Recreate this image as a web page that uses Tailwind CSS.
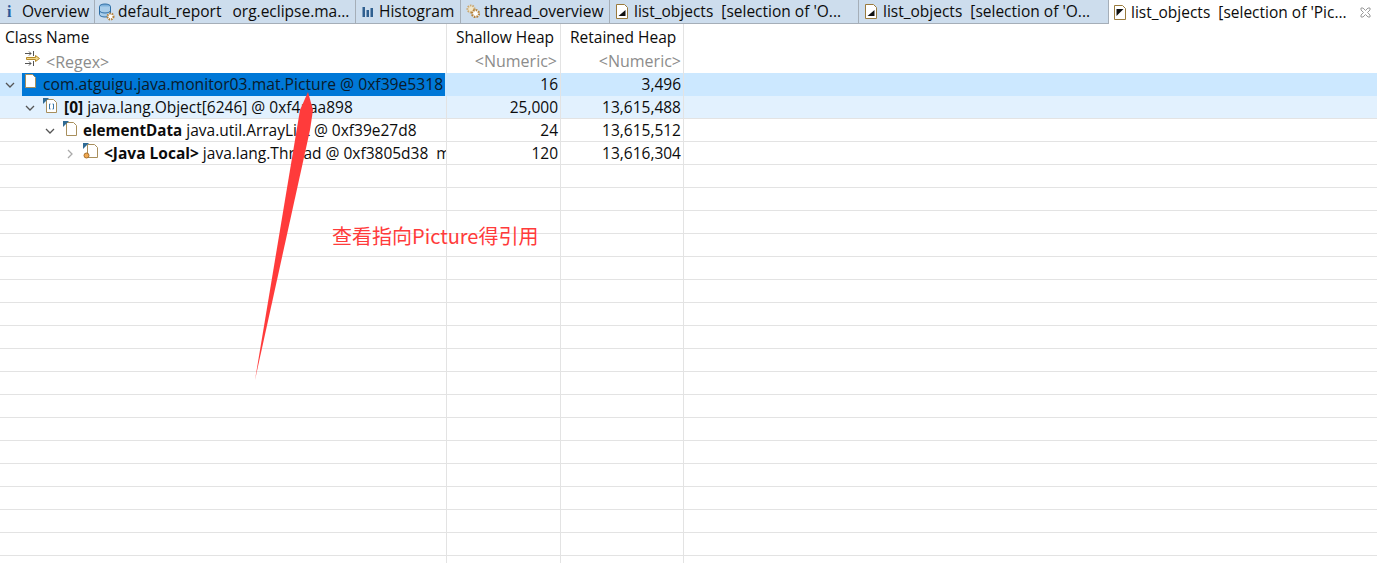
<!DOCTYPE html>
<html lang="en">
  <head>
    <meta charset="UTF-8" />
    <title>list_objects</title>
    <script src="https://cdn.jsdelivr.net/npm/@tailwindcss/browser@4"></script>
  </head>
  <body class="relative h-[563px] w-[1377px] overflow-hidden bg-white font-['Open_Sans','Noto_Sans_CJK_SC',sans-serif] text-[15.5px] text-[#0c0c0c]">
    <!-- tab bar -->
    <div class="flex h-6 border-b border-[#a5aeb8] bg-[#cddded] leading-[25px]">
      <div class="flex w-[95px] shrink-0 items-center border-r border-[#a5aeb8] pl-[7px]">
        <span class="w-[15px] font-['Liberation_Serif',serif] text-[16px] font-bold text-[#2a5a9a]">i</span>
        <span>Overview</span>
      </div>
      <div class="flex w-[261px] shrink-0 items-center gap-[3px] border-r border-[#a5aeb8] pl-[3px]">
        <svg width="17" height="18" viewBox="0 0 17 18">
          <ellipse cx="7" cy="3.500" rx="5.500" ry="2.500" fill="#7fb2dc" stroke="#2f6ea5" />
          <path d="M1.500 3.500v8c0 1.400 2.500 2.500 5.500 2.500s5.500-1.100 5.500-2.500v-8" fill="#a9cdea" stroke="#2f6ea5" />
          <path d="M1.500 7.500c0 1.400 2.500 2.500 5.500 2.500s5.500-1.100 5.500-2.500" fill="none" stroke="#2f6ea5" />
          <circle cx="12.500" cy="13.500" r="3" fill="#fff" stroke="#b5813a" stroke-width="2" stroke-dasharray="1.500 1" />
          <circle cx="12.500" cy="13.500" r="1" fill="#fff" />
        </svg>
        <span>default_report<span class="ml-[3px]">&nbsp; org.eclipse.ma...</span></span>
      </div>
      <div class="flex w-[105px] shrink-0 items-center gap-[5px] border-r border-[#a5aeb8] pl-[6px]">
        <svg width="12" height="12" viewBox="0 0 12 12" fill="#2f5f8f">
          <rect x="0.500" y="1" width="2.500" height="10" />
          <rect x="4.500" y="4" width="2.500" height="7" />
          <rect x="8.500" y="2" width="2.500" height="9" />
        </svg>
        <span>Histogram</span>
      </div>
      <div class="flex w-[149px] shrink-0 items-center gap-[2px] border-r border-[#a5aeb8] pl-[4px]">
        <svg width="17" height="17" viewBox="0 0 17 17">
          <circle cx="6" cy="6" r="3.500" fill="#f2e6c8" stroke="#c9a873" stroke-width="2" stroke-dasharray="1.500 1" />
          <circle cx="10.500" cy="10.500" r="3.500" fill="#fff" stroke="#b5813a" stroke-width="2.200" stroke-dasharray="1.700 1" />
        </svg>
        <span>thread_overview</span>
      </div>
      <div class="flex w-[249px] shrink-0 items-center gap-[6px] border-r border-[#a5aeb8] pl-[6px]">
        <svg width="12" height="15" viewBox="0 0 12 15">
          <path d="M0.500 0.500h8l3 3v11h-11z" fill="#fff" stroke="#9a7a3c" />
          <path d="M9.500 6v6h-7z" fill="#111" />
        </svg>
        <span>list_objects&nbsp; [selection of 'O...</span>
      </div>
      <div class="flex w-[250px] shrink-0 items-center gap-[6px] border-r border-[#a5aeb8] pl-[6px]">
        <svg width="12" height="15" viewBox="0 0 12 15">
          <path d="M0.500 0.500h8l3 3v11h-11z" fill="#fff" stroke="#9a7a3c" />
          <path d="M9.500 6v6h-7z" fill="#111" />
        </svg>
        <span>list_objects&nbsp; [selection of 'O...</span>
      </div>
      <div class="-mb-px flex flex-1 items-center gap-[5px] bg-white pl-[5px]">
        <svg width="12" height="15" viewBox="0 0 12 15">
          <path d="M0.500 0.500h8l3 3v11h-11z" fill="#fff" stroke="#9a7a3c" />
          <path d="M2.500 4h7l-7 7z" fill="#111" />
        </svg>
        <span>list_objects&nbsp; [selection of 'Pic...</span>
        <svg class="ml-auto mr-[6px]" width="11" height="11" viewBox="0 0 11 11" fill="none" stroke="#9a9a9a">
          <path d="M1 1h2l2.500 2.500L8 1h2v2L7.500 5.500 10 8v2H8L5.500 7.500 3 10H1V8l2.500-2.500L1 3z" />
        </svg>
      </div>
    </div>

    <!-- table header -->
    <div class="grid h-[26px] grid-cols-[447px_114px_123px_1fr] items-center leading-[26px]">
      <div class="h-full border-r border-[#e3e3e3] pl-[5px]">Class Name</div>
      <div class="h-full border-r border-[#e3e3e3] pl-[9px]">Shallow Heap</div>
      <div class="h-full border-r border-[#e3e3e3] pl-[9px]">Retained Heap</div>
    </div>
    <!-- filter row -->
    <div class="grid h-[23px] grid-cols-[447px_114px_123px_1fr] items-center text-[16px] leading-[22px] text-[#8c8c8c]">
      <div class="flex h-full items-center gap-[5px] border-r border-[#e3e3e3] pl-[25px]">
        <svg class="-mt-[5px]" width="16" height="16" viewBox="0 0 16 16" fill="none">
          <path d="M0 2.500h6M4 0.500l2 2-2 2M8.500 0v5M0 12.500h6M4 10.500l2 2-2 2M8.500 10v5" stroke="#555" />
          <path d="M1.500 6.500h9V4.500l4 3-4 3V8.500h-9z" fill="#f3d98b" stroke="#b58a2a" />
        </svg>
        <span>&lt;Regex&gt;</span>
      </div>
      <div class="h-full border-r border-[#e3e3e3] pr-[3px] text-right">&lt;Numeric&gt;</div>
      <div class="h-full border-r border-[#e3e3e3] pr-[2px] text-right">&lt;Numeric&gt;</div>
    </div>

    <!-- rows -->
    <div id="rows">
      <div class="grid h-[23px] grid-cols-[447px_114px_123px_1fr] bg-[#cce8ff] leading-[23px]">
        <div class="flex h-full items-center">
          <svg class="ml-[5px] mr-[7px]" width="10" height="10" viewBox="0 0 10 10" fill="none" stroke="#555" stroke-width="1.300"><path d="M1 3l4 4 4-4" /></svg>
          <div class="flex h-full w-[423px] bg-[#0078d7]">
            <svg class="ml-[3px] mr-[7px] mt-px" width="11" height="14" viewBox="0 0 11 14">
              <path d="M0.500 0.500h7l3 3v10h-10z" fill="#fff" stroke="#a88f5c" />
            </svg>
            <span class="whitespace-nowrap text-[15.7px] text-[#0a1a2a]">com.atguigu.java.monitor03.mat.Picture @ 0xf39e5318</span>
          </div>
        </div>
        <div class="border-r border-[#e3e3e3] pr-[2px] text-right">16</div>
        <div class="border-r border-[#e3e3e3] pr-[2px] text-right">3,496</div>
      </div>
      <div class="grid h-[23px] grid-cols-[447px_114px_123px_1fr] border-b border-[#e3e3e3] bg-[#e2f1fe] leading-[23px]">
        <div class="flex items-center border-r border-[#e3e3e3]">
          <svg class="ml-[25px] mr-[8px]" width="10" height="10" viewBox="0 0 10 10" fill="none" stroke="#555" stroke-width="1.300"><path d="M1 3l4 4 4-4" /></svg>
          <svg class="mr-[6px] -mt-[5px]" width="15" height="15" viewBox="0 0 15 15">
            <path d="M3.500 1.500h7l3 3v10h-10z" fill="#fff" stroke="#a88f5c" />
            <path d="M0 0h6L0 6z" fill="#2f6a94" />
            <path d="M7.500 6h-1v5h1M9.500 6h1v5h-1" fill="none" stroke="#3b78a8" />
          </svg>
          <span class="whitespace-nowrap"><b>[0]</b> java.lang.Object[6246] @ 0xf4aaa898</span>
        </div>
        <div class="border-r border-[#e3e3e3] pr-[2px] text-right">25,000</div>
        <div class="border-r border-[#e3e3e3] pr-[2px] text-right">13,615,488</div>
      </div>
      <div class="grid h-[23px] grid-cols-[447px_114px_123px_1fr] border-b border-[#e3e3e3] leading-[23px]">
        <div class="flex items-center border-r border-[#e3e3e3]">
          <svg class="ml-[45px] mr-[8px]" width="10" height="10" viewBox="0 0 10 10" fill="none" stroke="#555" stroke-width="1.300"><path d="M1 3l4 4 4-4" /></svg>
          <svg class="mr-[5px] -mt-[5px]" width="15" height="15" viewBox="0 0 15 15">
            <path d="M3.500 1.500h7l3 3v10h-10z" fill="#fff" stroke="#a88f5c" />
            <path d="M0 0h6L0 6z" fill="#2f6a94" />
          </svg>
          <span class="whitespace-nowrap"><b class="text-[15.2px]">elementData</b> java.util.ArrayList @ 0xf39e27d8</span>
        </div>
        <div class="border-r border-[#e3e3e3] pr-[2px] text-right">24</div>
        <div class="border-r border-[#e3e3e3] pr-[2px] text-right">13,615,512</div>
      </div>
      <div class="grid h-[23px] grid-cols-[447px_114px_123px_1fr] border-b border-[#e3e3e3] leading-[23px]">
        <div class="flex items-center overflow-hidden border-r border-[#e3e3e3]">
          <svg class="ml-[65px] mr-[8px] shrink-0" width="10" height="10" viewBox="0 0 10 10" fill="none" stroke="#aaa" stroke-width="1.300"><path d="M3 1l4 4-4 4" /></svg>
          <svg class="mr-[5px] -mt-[5px] shrink-0" width="16" height="16" viewBox="0 0 16 16">
            <path d="M4.500 1.500h7l3 3v10h-10z" fill="#fff" stroke="#a88f5c" />
            <path d="M0 0h6L0 6z" fill="#2f6a94" />
            <circle cx="3.500" cy="12.500" r="2.500" fill="#f0a850" stroke="#a8702a" />
          </svg>
          <span class="whitespace-nowrap"><b>&lt;Java Local&gt;</b> java.lang.Thread @ 0xf3805d38&nbsp; main</span>
        </div>
        <div class="border-r border-[#e3e3e3] pr-[2px] text-right">120</div>
        <div class="border-r border-[#e3e3e3] pr-[2px] text-right">13,616,304</div>
      </div>
    </div>

    <!-- annotation drawn over the table -->
    <svg class="absolute left-0 top-0" width="1377" height="563" viewBox="0 0 1377 563">
      <path d="M255 380L300 110 308 92 313 110 310 130z" fill="#ff3b3b" />
    </svg>
    <div class="absolute left-[332px] top-[223px] font-['Noto_Sans_CJK_SC','Open_Sans',sans-serif] text-[20px] leading-[26px] text-[#ff3b3b]">查看指向Picture得引用</div>

    <script>
      // empty table rows down to the bottom of the window
      const rows = document.getElementById("rows");
      for (let i = 0; i < 18; i++) {
        rows.innerHTML += `
          <div class="grid h-[23px] grid-cols-[447px_114px_123px_1fr] border-b border-[#e3e3e3]">
            <div class="border-r border-[#e3e3e3]"></div>
            <div class="border-r border-[#e3e3e3]"></div>
            <div class="border-r border-[#e3e3e3]"></div>
          </div>`;
      }
    </script>
  </body>
</html>
